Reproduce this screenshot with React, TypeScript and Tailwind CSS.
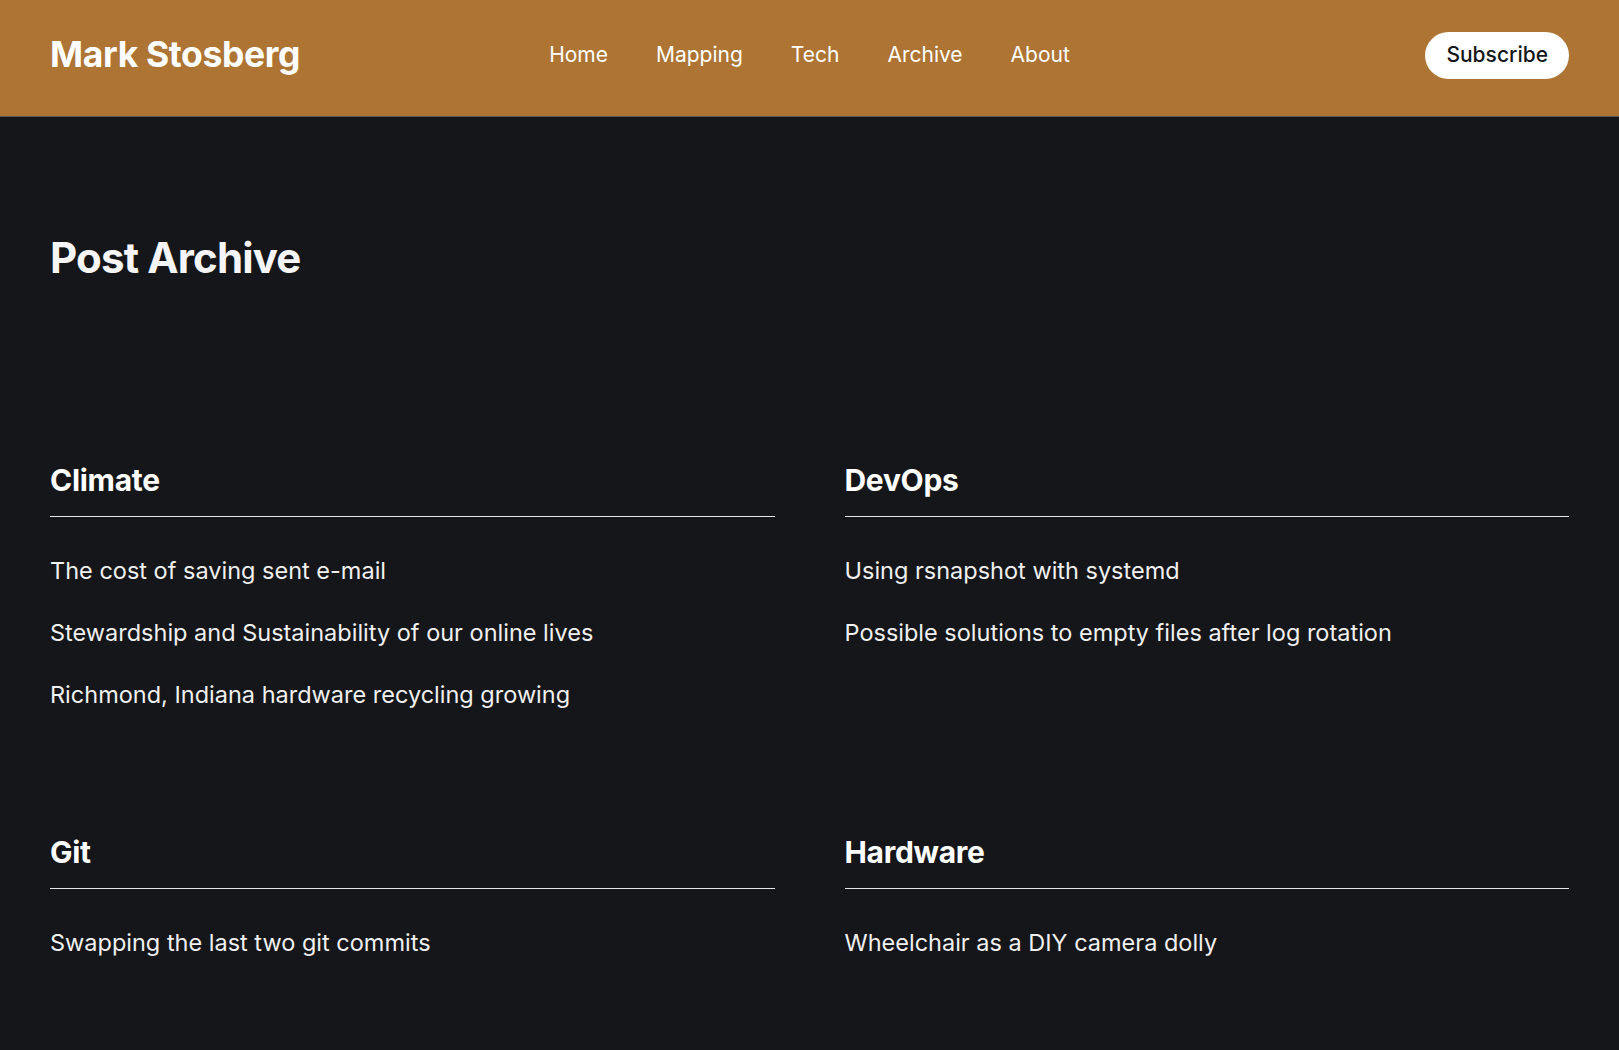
import React from "react";

const sections = [
  {
    title: "Climate",
    posts: [
      "The cost of saving sent e-mail",
      "Stewardship and Sustainability of our online lives",
      "Richmond, Indiana hardware recycling growing",
    ],
  },
  {
    title: "DevOps",
    posts: [
      "Using rsnapshot with systemd",
      "Possible solutions to empty files after log rotation",
    ],
  },
  { title: "Git", posts: ["Swapping the last two git commits"] },
  { title: "Hardware", posts: ["Wheelchair as a DIY camera dolly"] },
];

export default function App() {
  return (
    <div
      className="min-h-[1050px] bg-[#151619] text-white"
      style={{ fontFamily: "Inter, 'Noto Sans', sans-serif" }}
    >
      <header className="h-[117px] bg-[#ad7434] border-b border-[#5d5a56]">
        <div className="h-[110px] px-[50px] grid grid-cols-[1fr_auto_1fr] items-center">
          <a className="text-[35.5px] font-bold tracking-[-0.01em] text-white leading-none">
            Mark Stosberg
          </a>
          <nav className="flex items-center gap-[48px] text-[21px] font-normal text-white">
            <a>Home</a>
            <a>Mapping</a>
            <a>Tech</a>
            <a>Archive</a>
            <a>About</a>
          </nav>
          <div className="flex justify-end">
            <button className="h-[47px] px-[21px] rounded-full bg-white text-[#15171a] text-[21px] font-medium">
              Subscribe
            </button>
          </div>
        </div>
      </header>

      <main className="px-[50px] pt-[118px] pb-[80px]">
        <h1 className="text-[42px] leading-[46px] font-bold tracking-[-0.02em] text-[#f5f5f7]">
          Post Archive
        </h1>
        <div className="mt-[182px] grid grid-cols-2 gap-x-[70px] gap-y-[124px]">
          {sections.map((s) => (
            <section key={s.title}>
              <h2 className="text-[30px] leading-[34px] font-bold tracking-[-0.01em] text-white pb-[19px] border-b border-[#e6e6e6]">
                {s.title}
              </h2>
              <ul className="mt-[38px] flex flex-col gap-[30px]">
                {s.posts.map((p) => (
                  <li key={p} className="text-[23.5px] leading-[32px] text-[#f0f0f0]">
                    {p}
                  </li>
                ))}
              </ul>
            </section>
          ))}
        </div>
      </main>
    </div>
  );
}
